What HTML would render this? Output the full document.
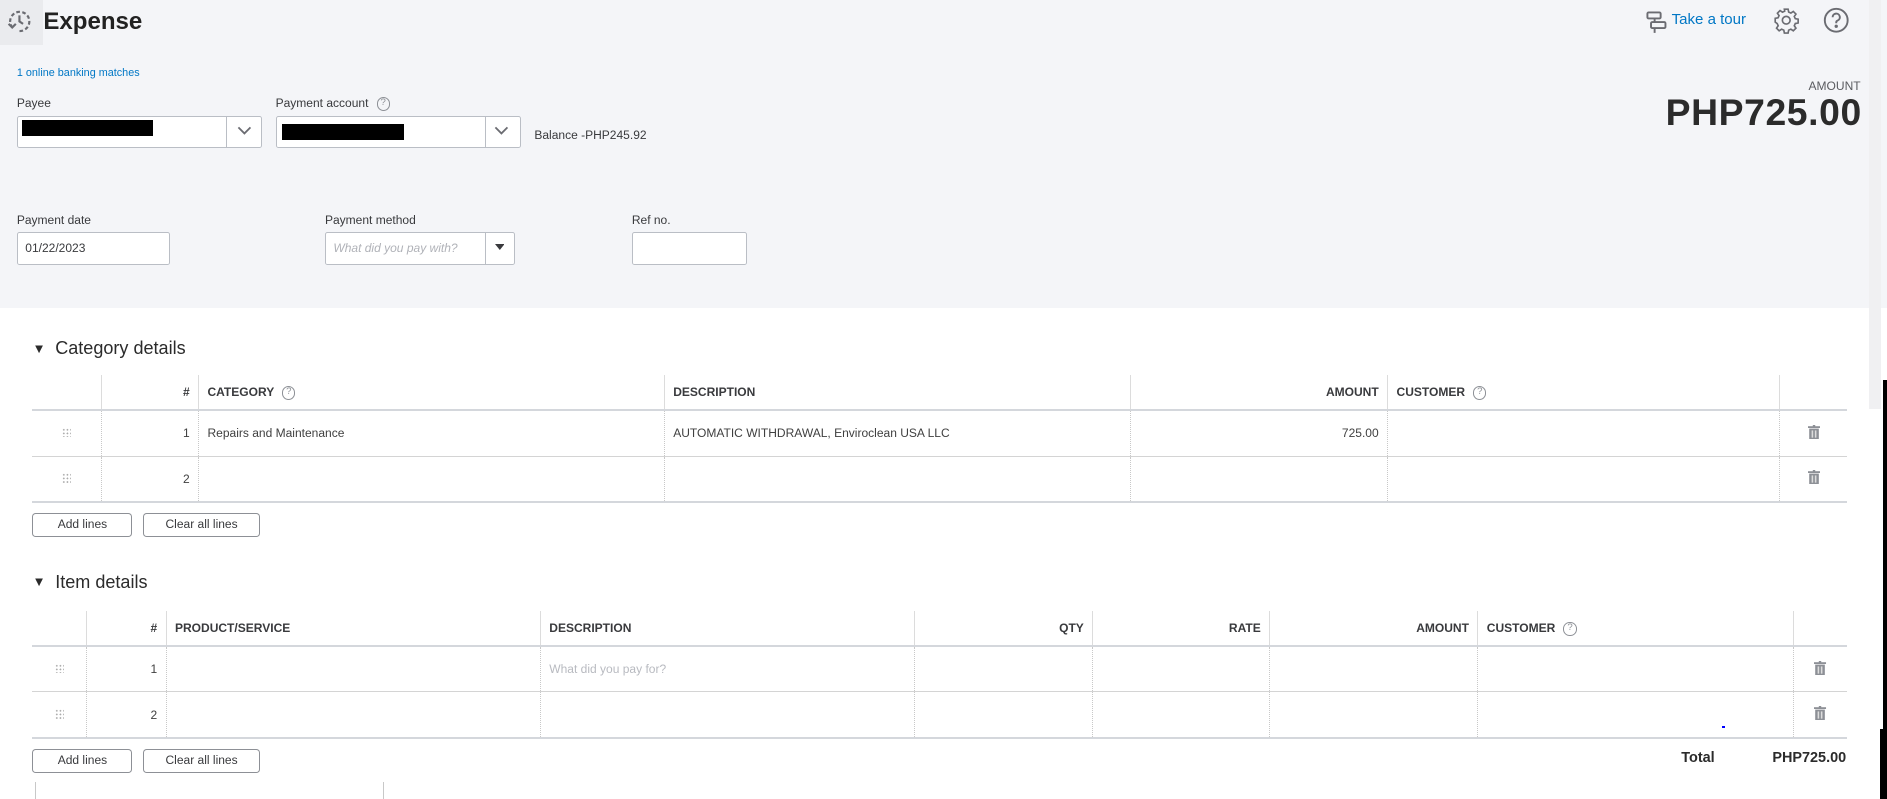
<!DOCTYPE html>
<html><head><meta charset="utf-8"><style>
*{margin:0;padding:0;box-sizing:border-box}
html,body{width:1887px;height:799px;overflow:hidden;background:#fff}
#w{zoom:1.2035;position:relative;width:1568px;height:664px;font-family:"Liberation Sans",sans-serif;color:#393a3d}
.a{position:absolute}
.top{left:0;top:0;width:1568px;height:256px;background:#f4f5f8}
.lbl{font-size:10px;color:#393a3d;position:absolute}
.inp{position:absolute;background:#fff;border:1px solid #babec5;border-radius:2px;height:27px}
.black{position:absolute;background:#000}
table{position:absolute;border-collapse:collapse;table-layout:fixed;font-size:10px}
th{height:29px;font-weight:bold;text-align:left;padding:0 7px;border-left:1px solid #dcdcdc;border-bottom:2px solid #d4d7dc;color:#393a3d;white-space:nowrap}
td{height:38px;padding:0 7px;border-left:1px dotted #c8c8c8;border-bottom:1px solid #d4d4d4;color:#404040;white-space:nowrap}
tr.last td{border-bottom:2px solid #d4d7dc}
th:first-child,td:first-child{border-left:none}
.r{text-align:right}
.btn{position:absolute;height:20px;border:1px solid #8d9096;border-radius:3px;background:#fff;font-size:10px;color:#393a3d;text-align:center;line-height:18px}
.q{display:inline-block;width:11px;height:11px;border:1px solid #8d9096;border-radius:50%;font-size:8px;line-height:9px;text-align:center;color:#8d9096;font-weight:normal;vertical-align:middle;margin-left:4px}
.dots{display:inline-block;width:8px;height:8px;background-image:radial-gradient(circle,#aaa 0.7px,transparent 0.8px);background-size:3px 3px}
</style></head><body><div id="w">
<div class="a top"></div>
<div class="a" style="left:0;top:0;width:36px;height:37px;background:#eaebee"></div>
<svg class="a" style="left:4px;top:6px" width="24" height="24" viewBox="0 0 24 24" fill="none" stroke="#6b6c72" stroke-width="1.8"><path d="M6 17A8 8 0 1 1 12 20" stroke-dasharray="3 2"/><path d="M12 7v5l3 2"/><path d="M3 14l3 3 3-3"/></svg>
<div class="a" style="left:36px;top:7px;font-size:20px;font-weight:bold;color:#222">Expense</div>
<div class="a" style="left:14px;top:56px;font-size:9px;color:#0077c5">1 online banking matches</div>
<div class="lbl" style="left:14px;top:80px">Payee</div>
<div class="inp" style="left:14px;top:96px;width:204px"></div>
<div class="a" style="left:188px;top:96px;width:1px;height:27px;background:#babec5"></div>
<svg class="a" style="left:196px;top:104px" width="14" height="10"><path d="M2 2l5 5 5-5" stroke="#6b6c72" stroke-width="1.5" fill="none"/></svg>
<div class="black" style="left:18px;top:100px;width:109px;height:13px"></div>
<div class="lbl" style="left:229px;top:80px">Payment account <span class="q">?</span></div>
<div class="inp" style="left:229px;top:96px;width:204px"></div>
<div class="a" style="left:403px;top:96px;width:1px;height:27px;background:#babec5"></div>
<svg class="a" style="left:410px;top:104px" width="14" height="10"><path d="M2 2l5 5 5-5" stroke="#6b6c72" stroke-width="1.5" fill="none"/></svg>
<div class="black" style="left:234px;top:103px;width:102px;height:13px"></div>
<div class="lbl" style="left:444px;top:106px">Balance -PHP245.92</div>
<div class="a" style="right:22px;top:66px;font-size:10px;color:#5a5b60">AMOUNT</div>
<div class="a" style="right:21px;top:76px;font-size:31px;font-weight:bold;color:#2b2b2b;letter-spacing:0.5px">PHP725.00</div>
<svg class="a" style="left:1367px;top:8px" width="20" height="20" viewBox="0 0 20 20" fill="none" stroke="#6b6c72" stroke-width="1.6"><rect x="2" y="2" width="11" height="5" rx="1"/><rect x="5" y="10" width="12" height="5" rx="1"/><path d="M8 7v3M8 15v4"/></svg>
<div class="a" style="left:1389px;top:9px;font-size:12.5px;color:#0077c5">Take a tour</div>
<svg class="a" style="left:1473px;top:6px" width="22" height="22" viewBox="0 0 24 24" fill="none" stroke="#6b6c72" stroke-width="1.5"><circle cx="12" cy="12" r="3.5"/><path d="M10.3 2h3.4l.5 2.6 2 .9 2.2-1.5 2.4 2.4-1.5 2.2.9 2 2.6.5v3.4l-2.6.5-.9 2 1.5 2.2-2.4 2.4-2.2-1.5-2 .9-.5 2.6h-3.4l-.5-2.6-2-.9-2.2 1.5-2.4-2.4 1.5-2.2-.9-2L2 13.7v-3.4l2.6-.5.9-2L4 5.6 6.4 3.2l2.2 1.5 2-.9z"/></svg>
<svg class="a" style="left:1515px;top:6px" width="22" height="22" viewBox="0 0 22 22" fill="none" stroke="#6b6c72" stroke-width="1.6"><circle cx="11" cy="11" r="9.5"/><path d="M8 8.5a3 3 0 1 1 4 2.8c-.7.3-1 .8-1 1.5v.7"/><circle cx="11" cy="16" r=".6" fill="#6b6c72"/></svg>
<div class="lbl" style="left:14px;top:177px">Payment date</div>
<div class="inp" style="left:14px;top:193px;width:127px"></div>
<div class="a" style="left:21px;top:200px;font-size:10px;color:#393a3d">01/22/2023</div>
<div class="lbl" style="left:270px;top:177px">Payment method</div>
<div class="inp" style="left:270px;top:193px;width:158px"></div>
<div class="a" style="left:403px;top:193px;width:1px;height:27px;background:#babec5"></div>
<div class="a" style="left:277px;top:200px;font-size:10px;color:#b0b2b8;font-style:italic">What did you pay with?</div>
<svg class="a" style="left:411px;top:203px" width="8" height="6"><path d="M0 0h8L4 5z" fill="#393a3d"/></svg>
<div class="lbl" style="left:525px;top:177px">Ref no.</div>
<div class="inp" style="left:525px;top:193px;width:96px"></div>
<div class="a" style="left:27px;top:281px;font-size:15px;color:#2b2b2b"><span style="font-size:11px;margin-right:8px;position:relative;top:-1px">▼</span>Category details</div>
<table style="left:27px;top:312px;width:1508px"><colgroup><col style="width:57px"><col style="width:81px"><col style="width:387px"><col style="width:387px"><col style="width:214px"><col style="width:326px"><col style="width:56px"></colgroup>
<tr><th style="border-left:none"></th><th class="r">#</th><th>CATEGORY <span class="q">?</span></th><th>DESCRIPTION</th><th class="r">AMOUNT</th><th>CUSTOMER <span class="q">?</span></th><th></th></tr>
<tr><td style="text-align:center"><span class="dots"></span></td><td class="r">1</td><td>Repairs and Maintenance</td><td>AUTOMATIC WITHDRAWAL, Enviroclean USA LLC</td><td class="r">725.00</td><td></td><td style="text-align:center"><svg width="10" height="12"><rect x="0" y="1" width="10" height="1.5" fill="#8d9096"/><rect x="4" y="0" width="2" height="1.5" fill="#8d9096"/><rect x="1" y="3" width="8" height="9" fill="#8d9096"/><rect x="3" y="4.5" width="1.3" height="6" fill="#ddd"/><rect x="5.7" y="4.5" width="1.3" height="6" fill="#ddd"/></svg></td></tr>
<tr class="last"><td style="text-align:center"><span class="dots"></span></td><td class="r">2</td><td></td><td></td><td></td><td></td><td style="text-align:center"><svg width="10" height="12"><rect x="0" y="1" width="10" height="1.5" fill="#8d9096"/><rect x="4" y="0" width="2" height="1.5" fill="#8d9096"/><rect x="1" y="3" width="8" height="9" fill="#8d9096"/><rect x="3" y="4.5" width="1.3" height="6" fill="#ddd"/><rect x="5.7" y="4.5" width="1.3" height="6" fill="#ddd"/></svg></td></tr>
</table>
<div class="btn" style="left:27px;top:426px;width:83px">Add lines</div>
<div class="btn" style="left:119px;top:426px;width:97px">Clear all lines</div>
<div class="a" style="left:27px;top:475px;font-size:15px;color:#2b2b2b"><span style="font-size:11px;margin-right:8px;position:relative;top:-1px">▼</span>Item details</div>
<table style="left:27px;top:508px;width:1508px"><colgroup><col style="width:45px"><col style="width:66px"><col style="width:311px"><col style="width:311px"><col style="width:148px"><col style="width:147px"><col style="width:173px"><col style="width:262px"><col style="width:45px"></colgroup>
<tr><th></th><th class="r">#</th><th>PRODUCT/SERVICE</th><th>DESCRIPTION</th><th class="r">QTY</th><th class="r">RATE</th><th class="r">AMOUNT</th><th>CUSTOMER <span class="q">?</span></th><th></th></tr>
<tr><td style="text-align:center"><span class="dots"></span></td><td class="r">1</td><td></td><td style="color:#b8bac0">What did you pay for?</td><td></td><td></td><td></td><td></td><td style="text-align:center"><svg width="10" height="12"><rect x="0" y="1" width="10" height="1.5" fill="#8d9096"/><rect x="4" y="0" width="2" height="1.5" fill="#8d9096"/><rect x="1" y="3" width="8" height="9" fill="#8d9096"/><rect x="3" y="4.5" width="1.3" height="6" fill="#ddd"/><rect x="5.7" y="4.5" width="1.3" height="6" fill="#ddd"/></svg></td></tr>
<tr class="last"><td style="text-align:center"><span class="dots"></span></td><td class="r">2</td><td></td><td></td><td></td><td></td><td></td><td></td><td style="text-align:center"><svg width="10" height="12"><rect x="0" y="1" width="10" height="1.5" fill="#8d9096"/><rect x="4" y="0" width="2" height="1.5" fill="#8d9096"/><rect x="1" y="3" width="8" height="9" fill="#8d9096"/><rect x="3" y="4.5" width="1.3" height="6" fill="#ddd"/><rect x="5.7" y="4.5" width="1.3" height="6" fill="#ddd"/></svg></td></tr>
</table>
<div class="a" style="left:1431px;top:603px;width:2px;height:2px;background:#00f"></div>
<div class="btn" style="left:27px;top:622px;width:83px">Add lines</div>
<div class="btn" style="left:119px;top:622px;width:97px">Clear all lines</div>
<div class="a" style="left:1397px;top:623px;font-size:12px;font-weight:bold;color:#2b2b2b">Total</div>
<div class="a" style="right:34px;top:623px;font-size:12px;font-weight:bold;color:#2b2b2b">PHP725.00</div>
<div class="a" style="left:29px;top:650px;width:1px;height:14px;background:#c8c8c8"></div>
<div class="a" style="left:318px;top:650px;width:1px;height:14px;background:#c8c8c8"></div>
<div class="a" style="left:1553px;top:0;width:10px;height:340px;background:#f0f0f2"></div>
<div class="a" style="left:1565px;top:316px;width:3px;height:348px;background:#000"></div>
<div class="a" style="left:1562px;top:606px;width:6px;height:58px;background:#000"></div>
</div></body></html>
